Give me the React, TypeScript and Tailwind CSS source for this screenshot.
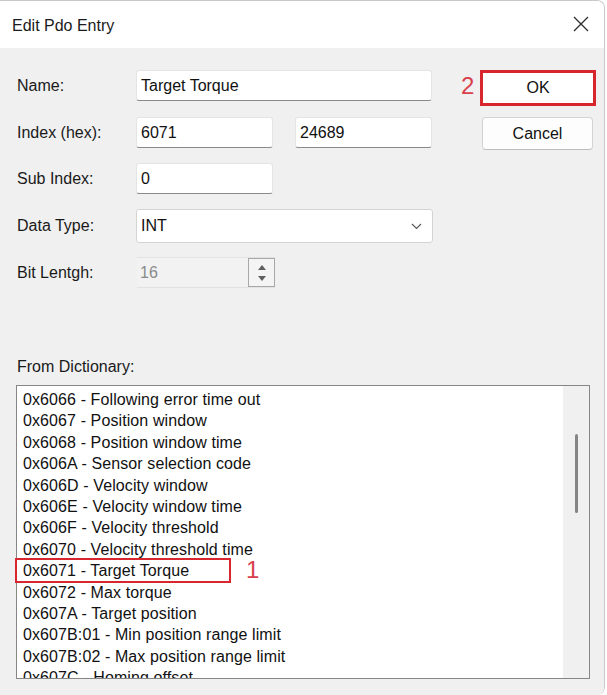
import React from "react";

const items = [
  "0x6066 - Following error time out",
  "0x6067 - Position window",
  "0x6068 - Position window time",
  "0x606A - Sensor selection code",
  "0x606D - Velocity window",
  "0x606E - Velocity window time",
  "0x606F - Velocity threshold",
  "0x6070 - Velocity threshold time",
  "0x6071 - Target Torque",
  "0x6072 - Max torque",
  "0x607A - Target position",
  "0x607B:01 - Min position range limit",
  "0x607B:02 - Max position range limit",
  "0x607C - Homing offset",
];

function TextBox({ value, w }: { value: string; w: string }) {
  return (
    <div
      className={`${w} h-[31px] bg-white border border-[#e4e4e4] border-b-[#8a8a8a] rounded-[3px] flex items-center pl-[4px] text-[16px] text-[#111]`}
    >
      {value}
    </div>
  );
}

export default function App() {
  return (
    <div className="w-[607px] h-[695px] bg-white font-['Liberation_Sans',Arial,sans-serif] text-[16px] text-[#1a1a1a] overflow-hidden">
      <div className="w-[605px] h-[695px] flex flex-col border-t border-r border-[#c9c9c9] rounded-tr-[8px] rounded-br-[8px] overflow-hidden">
        {/* Title bar */}
        <div className="h-[47px] shrink-0 bg-white flex items-center justify-between pl-[12px] pr-[15px]">
          <span className="text-[16px] text-[#1b1b1b] mt-[2px]">Edit Pdo Entry</span>
          <svg width="16" height="16" viewBox="0 0 16 16" className="mt-[-2px]">
            <path d="M1 1 L15 15 M15 1 L1 15" stroke="#2b2b2b" strokeWidth="1.3" fill="none" />
          </svg>
        </div>

        {/* Body */}
        <div className="flex-1 bg-[#f0f0f0] pt-[22px] flex flex-col">
          <div className="flex">
            {/* Form */}
            <div className="w-[433px] pl-[17px] flex flex-col">
              <div className="flex items-center h-[31px]">
                <span className="w-[119px]">Name:</span>
                <TextBox value="Target Torque" w="w-[296px]" />
              </div>
              <div className="flex items-center h-[31px] mt-[16px]">
                <span className="w-[119px]">Index (hex):</span>
                <TextBox value="6071" w="w-[137px]" />
                <div className="ml-[22px]">
                  <TextBox value="24689" w="w-[137px]" />
                </div>
              </div>
              <div className="flex items-center h-[31px] mt-[15px]">
                <span className="w-[119px]">Sub Index:</span>
                <TextBox value="0" w="w-[137px]" />
              </div>
              <div className="flex items-center h-[34px] mt-[15px]">
                <span className="w-[119px]">Data Type:</span>
                <div className="w-[297px] h-[34px] bg-white border border-[#d4d4d4] rounded-[3px] flex items-center justify-between pl-[4px] pr-[10px] text-[#111]">
                  <span>INT</span>
                  <svg width="11" height="7" viewBox="0 0 11 7">
                    <path d="M1 1 L5.5 5.5 L10 1" stroke="#5a5a5a" strokeWidth="1.2" fill="none" />
                  </svg>
                </div>
              </div>
              <div className="flex items-center h-[31px] mt-[14px]">
                <span className="w-[120px]">Bit Lentgh:</span>
                <div className="w-[138px] h-[31px] flex border-t border-b border-[#e2e2e2] bg-[#f2f2f2]">
                  <div className="flex-1 flex items-center pl-[3px] text-[#8a8a8a]">16</div>
                  <div className="w-[27px] h-full border border-[#a8a8a8] bg-[#f4f4f4] flex flex-col items-center justify-center gap-[6px]">
                    <svg width="8" height="5" viewBox="0 0 8 5">
                      <path d="M0 5 L4 0 L8 5 Z" fill="#606060" />
                    </svg>
                    <svg width="8" height="5" viewBox="0 0 8 5">
                      <path d="M0 0 L4 5 L8 0 Z" fill="#606060" />
                    </svg>
                  </div>
                </div>
              </div>
            </div>

            {/* Buttons */}
            <div className="ml-[47px] flex flex-col items-start">
              <div className="relative">
                <span className="absolute left-[-19px] top-[2px] text-[24px] leading-[28px] text-[#d9404c]">2</span>
                <div className="w-[116px] h-[36px] border-[3px] border-[#d8262f] bg-white flex items-center justify-center text-[#111]">
                  OK
                </div>
              </div>
              <div className="ml-[2px] mt-[11px] w-[111px] h-[33px] bg-[#fdfdfd] border border-[#d3d3d3] border-b-[#bdbdbd] rounded-[4px] flex items-center justify-center text-[#111]">
                Cancel
              </div>
            </div>
          </div>

          <div className="pl-[17px] mt-[69px] leading-[20px]">From Dictionary:</div>

          {/* List */}
          <div className="relative ml-[16px] mt-[8px] w-[574px] h-[294px] border border-[#868686] bg-white flex">
            <div className="flex-1 pl-[6px] pt-[3px] overflow-hidden">
              {items.map((t) => (
                <div key={t} className="h-[21.4px] leading-[21.4px] whitespace-nowrap text-[#111] tracking-[0.1px]">
                  {t}
                </div>
              ))}
            </div>
            <div className="w-[26px] bg-[#f0f0f0] flex justify-center pt-[48px]">
              <div className="w-[3px] h-[79px] rounded-full bg-[#858585]" />
            </div>
            <span className="absolute left-[-2px] top-[172px] w-[216px] h-[25px] border-2 border-[#d8262f]" />
            <span className="absolute left-[229px] top-[171px] text-[24px] leading-[26px] text-[#d9404c]">1</span>
          </div>
        </div>
      </div>
    </div>
  );
}
